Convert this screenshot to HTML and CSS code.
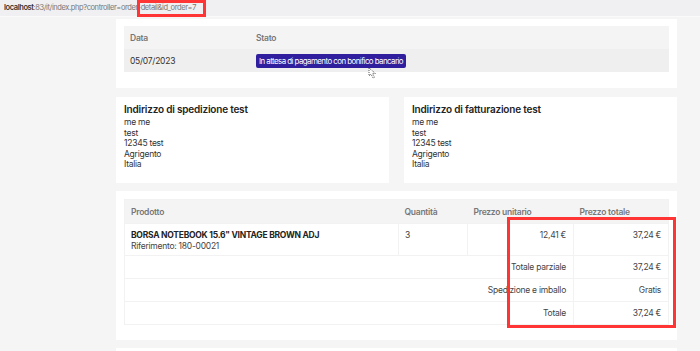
FILE: index.html
```html
<!doctype html>
<html lang="it">
<head>
    <meta charset="UTF-8">
    <title>Dettaglio ordine</title>
    <link rel="stylesheet" href="styles.css">
</head>
<body>
    <div class="urlbar">
        <span class="host">localhost</span><span class="path">:83/it/index.php?controller=order-detail&amp;id_order=7</span>
        <span class="mark mark-url"></span>
    </div>

    <div class="page">
        <div class="card card-status">
            <table class="grid">
                <thead>
                    <tr><th class="c-date">Data</th><th>Stato</th></tr>
                </thead>
                <tbody>
                    <tr class="shaded">
                        <td class="c-date">05/07/2023</td>
                        <td><span class="badge">In attesa di pagamento con bonifico bancario</span></td>
                    </tr>
                </tbody>
            </table>
            <svg class="cursor" width="10" height="12" viewBox="0 0 10 12">
                <path d="M1 1 L1 9 L3 7 L5 11 L6.5 10.3 L4.6 6.5 L7.5 6.5 Z" fill="#fff" stroke="#333" stroke-width="0.8" stroke-dasharray="1 1"/>
            </svg>
        </div>

        <div class="addresses">
            <div class="card address">
                <h4>Indirizzo di spedizione test</h4>
                <p>me me<br>test<br>12345 test<br>Agrigento<br>Italia</p>
            </div>
            <div class="card address">
                <h4>Indirizzo di fatturazione test</h4>
                <p>me me<br>test<br>12345 test<br>Agrigento<br>Italia</p>
            </div>
        </div>

        <div class="card card-products">
            <table class="grid products">
                <thead>
                    <tr>
                        <th class="c-prod">Prodotto</th>
                        <th class="c-qty">Quantità</th>
                        <th class="c-unit">Prezzo unitario</th>
                        <th class="c-tot">Prezzo totale</th>
                    </tr>
                </thead>
                <tbody>
                    <tr class="item">
                        <td>
                            <strong>BORSA NOTEBOOK 15.6" VINTAGE BROWN ADJ</strong><br>
                            Riferimento: 180-00021
                        </td>
                        <td>3</td>
                        <td class="num">12,41 €</td>
                        <td class="num">37,24 €</td>
                    </tr>
                    <tr class="sum">
                        <td colspan="3" class="num">Totale parziale</td>
                        <td class="num">37,24 €</td>
                    </tr>
                    <tr class="sum">
                        <td colspan="3" class="num">Spedizione e imballo</td>
                        <td class="num">Gratis</td>
                    </tr>
                    <tr class="sum">
                        <td colspan="3" class="num">Totale</td>
                        <td class="num">37,24 €</td>
                    </tr>
                </tbody>
            </table>
            <span class="mark mark-totals"></span>
        </div>

        <div class="card card-next"></div>
    </div>
</body>
</html>
```

FILE: styles.css
```css
* {
    margin: 0;
    padding: 0;
    box-sizing: border-box;
}

body {
    background: #f5f5f5;
    font-family: Inter, "Open Sans", sans-serif;
    font-size: 8.5px;
    color: #333;
    letter-spacing: -0.25px;
    overflow: hidden;
    height: 351px;
}

/* barra indirizzo */
.urlbar {
    position: relative;
    height: 17px;
    background: #f0f0f2;
    border-bottom: 1px solid #fafafa;
    padding: 0 4px;
    line-height: 16px;
    font-size: 7.5px;
    letter-spacing: -0.4px;
    color: #777;
}

.urlbar .host {
    color: #333;
    font-weight: 600;
}

.mark {
    position: absolute;
    border: 3px solid #ff3535;
    pointer-events: none;
}

.mark-url {
    left: 137px;
    top: 0;
    width: 69px;
    height: 17px;
}

/* contenuto */
.page {
    width: 561px;
    margin-left: 116px;
    padding-top: 2px;
    display: flex;
    flex-direction: column;
    gap: 8px;
}

.card {
    background: #fff;
}

.card-status {
    position: relative;
    padding: 7px 8px 16px;
}

.grid {
    width: 100%;
    border-collapse: collapse;
}

.grid th {
    background: #f4f4f4;
    color: #777;
    font-weight: 600;
    text-align: left;
    height: 23px;
    padding: 0 6px;
}

.grid td {
    padding: 0 6px;
}

.grid .shaded td {
    background: #efefef;
    height: 23px;
}

.c-date {
    width: 126px;
}

.badge {
    display: inline-block;
    background: #2f1f9f;
    color: #fff;
    border-radius: 2px;
    padding: 0 3px;
    line-height: 14px;
    font-size: 7.9px;
    letter-spacing: -0.55px;
}

.cursor {
    position: absolute;
    left: 252px;
    top: 48px;
}

/* indirizzi */
.addresses {
    display: grid;
    grid-template-columns: 273px 273px;
    justify-content: space-between;
    padding-top: 1px;
}

.address {
    height: 86px;
    padding: 6px 8px;
}

.address h4 {
    font-size: 10px;
    font-weight: 600;
    color: #232323;
    letter-spacing: -0.2px;
    line-height: 13px;
    margin-bottom: 1px;
}

.address p {
    line-height: 10.6px;
}

/* prodotti */
.card-products {
    position: relative;
    padding: 8px 8px 17px;
    height: 149px;
}

.products {
    border: 1px solid #f2f2f2;
}

.products th {
    height: 24px;
}

.products td {
    border-top: 1px solid #f2f2f2;
    border-left: 1px solid #f2f2f2;
    color: #444;
}

.c-prod {
    width: 274px;
}

.c-qty {
    width: 69px;
}

.c-unit {
    width: 106px;
}

.products .item td {
    height: 32px;
    vertical-align: top;
    padding-top: 6px;
    line-height: 10.5px;
}

.products .item strong {
    color: #232323;
    font-weight: 700;
}

.products .sum td {
    height: 23px;
}

.products .sum td:first-child {
    border-left: 0;
}

.num {
    text-align: right;
    padding-right: 7px !important;
}

.mark-totals {
    left: 391px;
    top: 26px;
    width: 169px;
    height: 111px;
}

.card-next {
    height: 10px;
}
```
